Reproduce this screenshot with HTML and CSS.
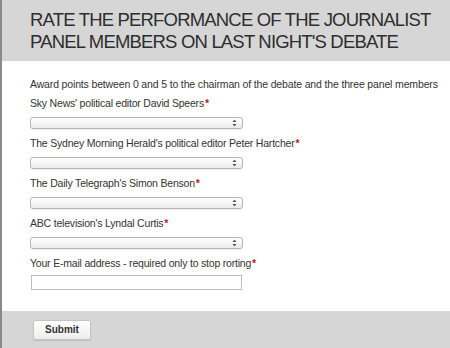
FILE: index.html
```html
<!DOCTYPE html>
<html>
<head>
<meta charset="utf-8">
<link rel="stylesheet" href="styles.css">
</head>
<body>
<div class="page">
  <div class="header">
    <h1 class="title">RATE THE PERFORMANCE OF THE JOURNALIST<br>PANEL MEMBERS ON LAST NIGHT'S DEBATE</h1>
  </div>
  <form class="content">
    <p class="intro">Award points between 0 and 5 to the chairman of the debate and the three panel members</p>
    <div class="field">
      <label class="label">Sky News' political editor David Speers<span class="req">*</span></label>
      <div class="select-wrap"><select class="select"><option></option></select><span class="arrows"><svg width="5" height="8" viewBox="0 0 5 8"><path d="M0.5 3 L2.5 0.5 L4.5 3 Z M0.5 5 L2.5 7.5 L4.5 5 Z" fill="#555"/></svg></span></div>
    </div>
    <div class="field">
      <label class="label">The Sydney Morning Herald's political editor Peter Hartcher<span class="req">*</span></label>
      <div class="select-wrap"><select class="select"><option></option></select><span class="arrows"><svg width="5" height="8" viewBox="0 0 5 8"><path d="M0.5 3 L2.5 0.5 L4.5 3 Z M0.5 5 L2.5 7.5 L4.5 5 Z" fill="#555"/></svg></span></div>
    </div>
    <div class="field">
      <label class="label">The Daily Telegraph's Simon Benson<span class="req">*</span></label>
      <div class="select-wrap"><select class="select"><option></option></select><span class="arrows"><svg width="5" height="8" viewBox="0 0 5 8"><path d="M0.5 3 L2.5 0.5 L4.5 3 Z M0.5 5 L2.5 7.5 L4.5 5 Z" fill="#555"/></svg></span></div>
    </div>
    <div class="field">
      <label class="label">ABC television's Lyndal Curtis<span class="req">*</span></label>
      <div class="select-wrap"><select class="select"><option></option></select><span class="arrows"><svg width="5" height="8" viewBox="0 0 5 8"><path d="M0.5 3 L2.5 0.5 L4.5 3 Z M0.5 5 L2.5 7.5 L4.5 5 Z" fill="#555"/></svg></span></div>
    </div>
    <div class="field last">
      <label class="label">Your E-mail address - required only to stop rorting<span class="req">*</span></label>
      <input class="input" type="text">
    </div>
  </form>
  <div class="footer">
    <button class="submit" type="button">Submit</button>
  </div>
</div>
</body>
</html>
```

FILE: styles.css
```css
html, body {
  margin: 0;
  padding: 0;
  background: #ffffff;
}
body {
  font-family: "Liberation Sans", Arial, sans-serif;
  color: #333333;
}
.page {
  border-left: 2px solid #8a8a8a;
  height: 348px;
  box-sizing: border-box;
  display: flex;
  flex-direction: column;
}
.header {
  background: #d6d6d6;
  padding: 9px 0 8px 28px;
  height: 61px;
  box-sizing: border-box;
}
.title {
  margin: 0;
  font-size: 18.5px;
  line-height: 22px;
  letter-spacing: -0.82px;
  font-weight: normal;
  color: #2e2e2e;
  white-space: nowrap;
}
.content {
  margin: 0;
  padding: 16px 0 0 28px;
  flex: 1;
  display: flex;
  flex-direction: column;
}
.intro {
  margin: 0 0 5px 0;
  font-size: 10.5px;
  line-height: 14px;
  letter-spacing: -0.15px;
  white-space: nowrap;
}
.field {
  display: flex;
  flex-direction: column;
  align-items: flex-start;
  margin-bottom: 7px;
}
.label {
  font-size: 10.5px;
  line-height: 14px;
  letter-spacing: -0.2px;
  margin-bottom: 7px;
}
.req {
  color: #c0171d;
  font-weight: bold;
  margin-left: 1px;
}
.select-wrap {
  position: relative;
  width: 213px;
  height: 12px;
}
.select {
  -webkit-appearance: none;
  appearance: none;
  display: block;
  width: 213px;
  height: 12px;
  margin: 0;
  padding: 0;
  border: 1px solid #b5b5b5;
  border-radius: 3px;
  background: linear-gradient(#ffffff, #ececec);
  box-shadow: 0 1px 1px rgba(0,0,0,0.08);
  box-sizing: border-box;
}
.arrows {
  position: absolute;
  right: 6px;
  top: 2px;
  width: 5px;
  height: 8px;
  display: flex;
}
.input {
  display: block;
  width: 211px;
  height: 15px;
  margin: -2px 0 0 1px;
  padding: 0;
  border: 1px solid #bdbdbd;
  box-sizing: border-box;
  background: #fff;
}
.footer {
  background: #d6d6d6;
  height: 37px;
  padding: 8px 0 0 31px;
  box-sizing: border-box;
}
.submit {
  width: 58px;
  height: 20px;
  margin: 0;
  padding: 0;
  border: 1px solid #c4c4c4;
  border-radius: 2px;
  background: linear-gradient(#ffffff, #ededed);
  font-family: "Liberation Sans", Arial, sans-serif;
  font-size: 10px;
  font-weight: bold;
  color: #333;
  box-shadow: 0 1px 1px rgba(0,0,0,0.1);
}
```
